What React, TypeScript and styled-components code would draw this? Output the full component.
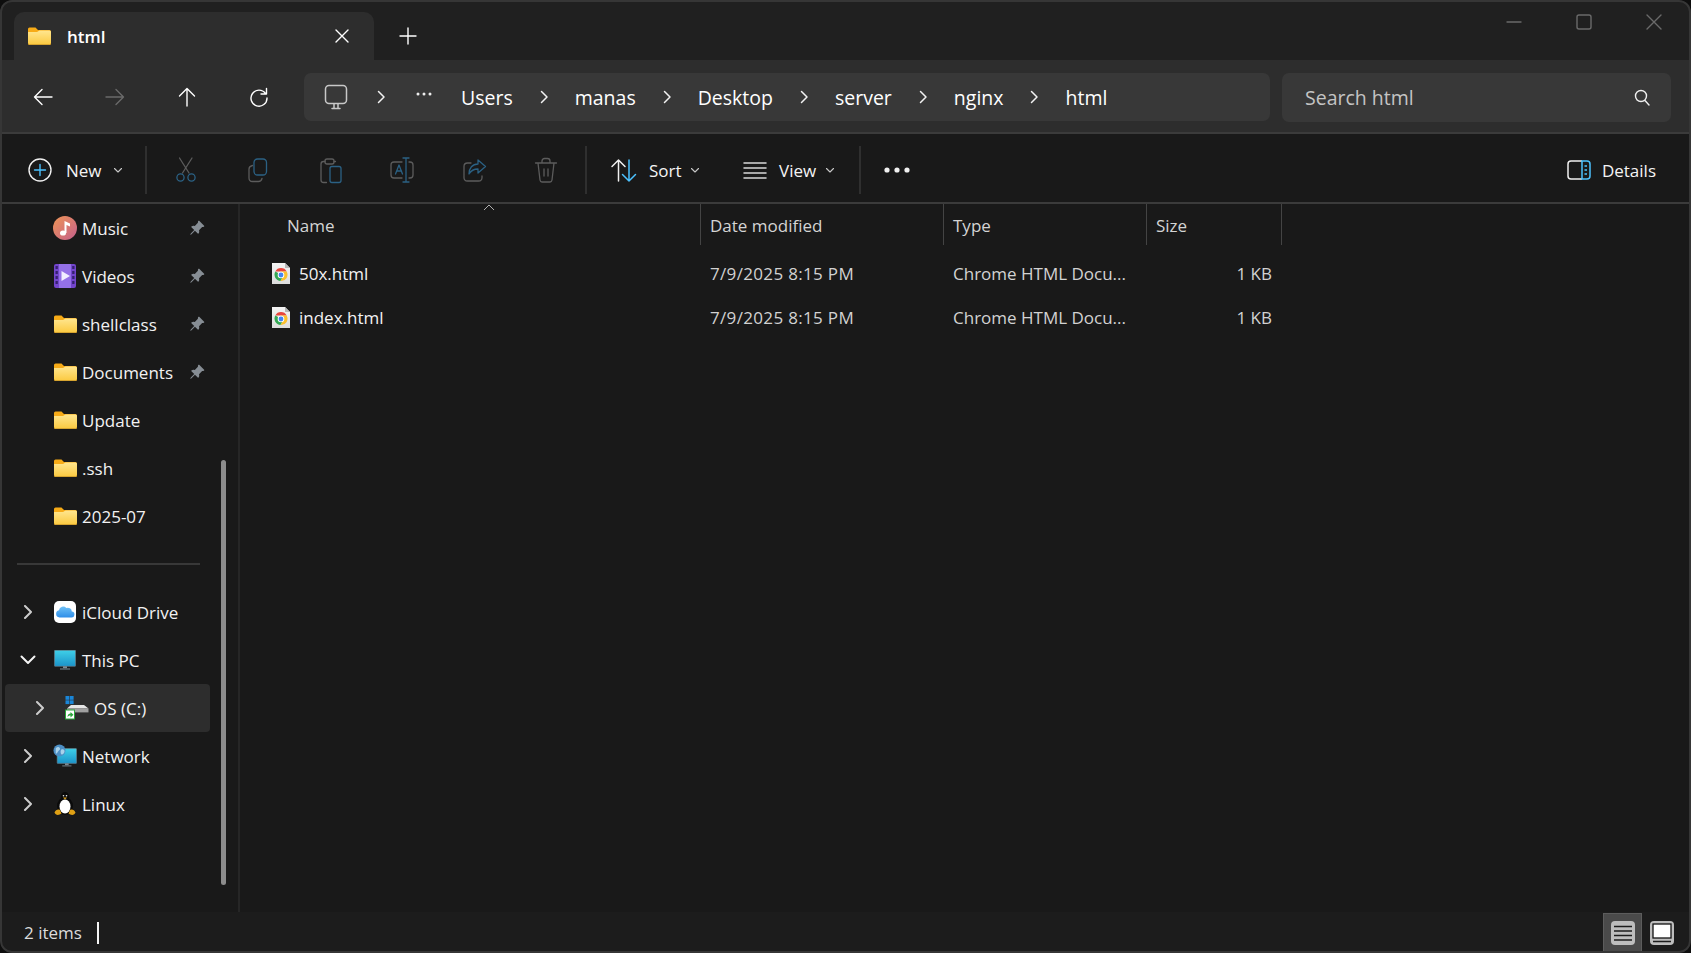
import React from 'react';
import styled, { createGlobalStyle } from 'styled-components';
import { BsPinAngleFill } from 'react-icons/bs';

const GlobalStyle = createGlobalStyle`
  html, body {
    margin: 0;
    padding: 0;
    background: #0e0e0e;
    overflow: hidden;
  }
  * {
    box-sizing: border-box;
  }
`;

const Window = styled.div`
  position: relative;
  width: 1691px;
  height: 953px;
  display: flex;
  flex-direction: column;
  background: #191919;
  border-radius: 12px;
  overflow: hidden;
  color: #f2f2f2;
  font-family: 'Open Sans', 'Liberation Sans', sans-serif;
  font-size: 17px;

  &::after {
    content: '';
    position: absolute;
    inset: 0;
    border: 2px solid #363636;
    border-radius: 12px;
    pointer-events: none;
  }
`;

const TabStrip = styled.div`
  height: 60px;
  flex: none;
  display: flex;
  align-items: flex-end;
  padding-left: 14px;
  background: #202020;
`;

const Tab = styled.div`
  width: 360px;
  height: 48px;
  display: flex;
  align-items: center;
  padding: 0 20px 0 14px;
  gap: 16px;
  background: #2d2d2d;
  border-radius: 10px 10px 0 0;
`;

const TabTitle = styled.span`
  flex: 1;
  font-size: 17px;
  font-weight: 600;
  color: #fff;
`;

const AddTab = styled.div`
  width: 68px;
  height: 48px;
  display: flex;
  align-items: center;
  justify-content: center;
`;

const WindowButtons = styled.div`
  margin-left: auto;
  align-self: flex-start;
  height: 44px;
  display: flex;
  align-items: center;
  padding-right: 2px;
`;

const WindowButton = styled.div`
  width: 70px;
  display: flex;
  justify-content: center;
`;

const NavBar = styled.div`
  height: 74px;
  flex: none;
  display: flex;
  align-items: center;
  padding: 2px 20px 0 7px;
  background: #2d2d2d;
  border-bottom: 2px solid #3b3b3b;
`;

const NavButton = styled.div`
  width: 72px;
  display: flex;
  justify-content: center;
`;

const AddressBar = styled.div`
  width: 966px;
  height: 48px;
  margin-left: 9px;
  display: flex;
  align-items: center;
  gap: 25px;
  padding-left: 18px;
  background: #383838;
  border-radius: 7px;
`;

const Crumb = styled.span`
  font-size: 19.5px;
  color: #fff;
`;

const CrumbDots = styled.svg`
  flex: none;
  margin: 0 3px 6px 3px;
`;

const SearchBox = styled.div`
  flex: 1;
  height: 49px;
  margin-left: 12px;
  display: flex;
  align-items: center;
  justify-content: space-between;
  padding: 0 17px 0 23px;
  background: #383838;
  border-radius: 7px;
  font-size: 19.5px;
  color: #c4c4c4;
`;

const ToolBar = styled.div`
  height: 70px;
  flex: none;
  display: flex;
  align-items: center;
  padding-top: 4px;
  background: #191919;
  border-bottom: 2px solid #3b3b3b;
`;

const LabelButton = styled.div<{ $width: number; $pad: number; $gap?: number }>`
  width: ${(p) => p.$width}px;
  padding-left: ${(p) => p.$pad}px;
  display: flex;
  align-items: center;
  gap: ${(p) => p.$gap ?? 10}px;
  flex: none;
`;

const ButtonLabel = styled.span`
  color: #f4f4f4;
`;

const DropCaret = styled.svg`
  flex: none;
  margin-left: -3px;
`;

const ToolSep = styled.div`
  width: 2px;
  height: 48px;
  margin: 0 3px;
  flex: none;
  background: #2f2f2f;
`;

const ToolIcon = styled.div`
  width: 72px;
  display: flex;
  justify-content: center;
  flex: none;
`;

const DetailsButton = styled.div`
  margin-left: auto;
  padding-right: 35px;
  display: flex;
  align-items: center;
  gap: 11px;
`;

const Body = styled.div`
  flex: 1;
  min-height: 0;
  display: flex;
`;

const Sidebar = styled.nav`
  position: relative;
  width: 240px;
  flex: none;
  border-right: 2px solid #262626;
`;

const NavRow = styled.div<{ $depth?: number; $active?: boolean }>`
  width: 205px;
  height: 48px;
  margin-left: 5px;
  display: flex;
  align-items: center;
  padding: 0 5px 0 ${(p) => 11 + (p.$depth ?? 0) * 12}px;
  background: ${(p) => (p.$active ? '#2d2d2d' : 'transparent')};
  border-radius: 4px;
`;

const ChevronSlot = styled.div`
  width: 24px;
  flex: none;
  display: flex;
  justify-content: center;
`;

const RowIcon = styled.div`
  width: 24px;
  height: 24px;
  margin: 0 5px 0 13px;
  flex: none;
  display: flex;
  align-items: center;
  justify-content: center;
`;

const PinSlot = styled.div`
  margin-left: auto;
  width: 16px;
  display: flex;
  color: #868d94;
`;

const NavDivider = styled.div`
  height: 48px;
  display: flex;
  align-items: center;
  padding: 0 38px 0 17px;

  &::before {
    content: '';
    flex: 1;
    height: 2px;
    background: #383838;
  }
`;

const ScrollThumb = styled.div`
  position: absolute;
  left: 221px;
  top: 256px;
  width: 5px;
  height: 425px;
  border-radius: 3px;
  background: #8c8c8c;
`;

const Content = styled.main`
  flex: 1;
  min-width: 0;
`;

const columns = '461px 243px 203px 135px';

const ListHeader = styled.div`
  position: relative;
  display: grid;
  grid-template-columns: ${columns};
  height: 41px;
  margin-bottom: 7px;
`;

const HeaderCell = styled.div<{ $pad: number }>`
  display: flex;
  align-items: center;
  padding: 2px 0 0 ${(p) => p.$pad}px;
  border-right: 1px solid #444;
  color: #d4d4d4;
`;

const SortCaret = styled.svg`
  position: absolute;
  left: 243px;
  top: 0;
`;

const FileRow = styled.div`
  display: grid;
  grid-template-columns: ${columns};
  height: 43.5px;
  align-items: center;
`;

const NameCell = styled.div`
  display: flex;
  align-items: center;
  gap: 9px;
  padding-left: 32px;
`;

const FileCell = styled.div<{ $right?: boolean; $spaced?: boolean }>`
  padding: 0 10px 0 9px;
  text-align: ${(p) => (p.$right ? 'right' : 'left')};
  letter-spacing: ${(p) => (p.$spaced ? '0.33px' : '0')};
  color: #d2d2d2;
  white-space: nowrap;
`;

const FileName = styled.span`
  color: #f2f2f2;
`;

const StatusBar = styled.div`
  height: 41px;
  flex: none;
  display: flex;
  align-items: center;
  padding: 0 10px 0 24px;
  background: #1c1c1c;
  color: #dcdcdc;
`;

const Caret = styled.div`
  width: 2px;
  height: 22px;
  margin-left: 15px;
  background: #f4f4f4;
`;

const ViewToggle = styled.div<{ $on?: boolean }>`
  width: 39px;
  height: 39px;
  margin-left: ${(p) => (p.$on ? 'auto' : '0')};
  display: flex;
  align-items: center;
  justify-content: center;
  background: ${(p) => (p.$on ? '#4a4a4a' : 'transparent')};
  border: 1px solid ${(p) => (p.$on ? '#5c5c5c' : 'transparent')};
`;

const dim = '#5c5c5c';
const dimBlue = '#2b6184';
const sky = '#4cc2ff';

const Line = ({ d, color = '#fff', size = 24, width = 1.4 }: { d: string; color?: string; size?: number; width?: number }) => (
  <svg width={size} height={size} viewBox={`0 0 ${size} ${size}`} fill="none" stroke={color} strokeWidth={width} strokeLinecap="round" strokeLinejoin="round">
    <path d={d} />
  </svg>
);

const Chevron = ({ open }: { open?: boolean }) => (
  <svg width="16" height="14" viewBox="0 0 16 14" fill="none" stroke={open ? '#f4f4f4' : '#cccccc'} strokeWidth="2" strokeLinecap="round" strokeLinejoin="round">
    <path d={open ? 'M1.500 3.500 8 10 14.500 3.500' : 'M5 1 11 7 5 13'} />
  </svg>
);

const CrumbSep = () => (
  <svg width="12" height="16" viewBox="0 0 12 16" fill="none" stroke="#f2f2f2" strokeWidth="1.500" strokeLinecap="round" strokeLinejoin="round">
    <path d="M3.500 2.500 9 8 3.500 13.500" />
  </svg>
);

const Caretdown = () => (
  <DropCaret width="10" height="10" viewBox="0 0 10 10" fill="none" stroke="#c8c8c8" strokeWidth="1.100" strokeLinecap="round" strokeLinejoin="round">
    <path d="M1.500 3.500 5 7 8.500 3.500" />
  </DropCaret>
);

const Folder = ({ id }: { id: string }) => (
  <svg width="23" height="18" viewBox="0 0 23 18">
    <defs>
      <linearGradient id={id} x1="0" y1="0" x2="0" y2="1">
        <stop offset="0" stopColor="#ffe68f" />
        <stop offset="1" stopColor="#fbc93f" />
      </linearGradient>
    </defs>
    <path d="M0 2a1.500 1.500 0 0 1 1.500-1.500h6L10 3h11.500A1.500 1.500 0 0 1 23 4.500V7H0z" fill="#f7ab17" />
    <path d="M0 5h9l2.500-1.500H21.500A1.500 1.500 0 0 1 23 5v11.500a1.500 1.500 0 0 1-1.500 1.500h-20A1.500 1.500 0 0 1 0 16.500z" fill={`url(#${id})`} />
    <path d="M0 16.500a1.500 1.500 0 0 0 1.500 1.500h20a1.500 1.500 0 0 0 1.500-1.500" fill="none" stroke="#b17f1e" strokeWidth="1" />
  </svg>
);

const MusicIcon = () => (
  <svg width="24" height="24" viewBox="0 0 24 24">
    <defs>
      <linearGradient id="music" x1="0" y1="0" x2="1" y2="1">
        <stop offset="0" stopColor="#ee9556" />
        <stop offset="1" stopColor="#c45f8c" />
      </linearGradient>
    </defs>
    <circle cx="12" cy="12" r="12" fill="url(#music)" />
    <ellipse cx="10" cy="17" rx="3" ry="2.600" fill="#fff" />
    <path d="M11.500 17V5l5.500 2.500v3l-3.500-1.500V17z" fill="#fff" />
  </svg>
);

const VideoIcon = () => (
  <svg width="22" height="24" viewBox="0 0 22 24">
    <rect width="22" height="24" rx="2" fill="#7345cc" />
    <rect x="5" y="0" width="12" height="24" fill="#9470e6" />
    {[2, 7, 12, 17].map((y) => (
      <g key={y} fill="#35216f">
        <rect x="1.500" y={y} width="2.300" height="3" />
        <rect x="18.200" y={y} width="2.300" height="3" />
      </g>
    ))}
    <path d="M7.500 7 16 12l-8.500 5z" fill="#f1edff" />
  </svg>
);

const CloudIcon = () => (
  <svg width="22" height="22" viewBox="0 0 22 22">
    <defs>
      <linearGradient id="cloud" x1="0" y1="0" x2="0" y2="1">
        <stop offset="0" stopColor="#6ec1f7" />
        <stop offset="1" stopColor="#2f8ee8" />
      </linearGradient>
    </defs>
    <rect width="22" height="22" rx="5" fill="#fff" />
    <path d="M5.500 16.500a3.700 3.700 0 0 1-.5-7.300 4.200 4.200 0 0 1 7.300-2.200 4 4 0 0 1 5.500 3.500 3 3 0 0 1-.8 6z" fill="url(#cloud)" />
  </svg>
);

const Monitor = ({ id, x = 0, y = 0 }: { id: string; x?: number; y?: number }) => (
  <g transform={`translate(${x} ${y})`}>
    <defs>
      <linearGradient id={id} x1="0" y1="0" x2="0" y2="1">
        <stop offset="0" stopColor="#3fd0e8" />
        <stop offset="1" stopColor="#1b93c9" />
      </linearGradient>
    </defs>
    <rect width="21" height="16" rx="0.500" fill={`url(#${id})`} stroke="#70808a" strokeWidth="0.600" />
    <rect x="8.500" y="16" width="4" height="2" fill="#7d8b93" />
    <rect x="5.500" y="18" width="10" height="1.400" fill="#5f6b72" />
  </g>
);

const PcIcon = () => (
  <svg width="22" height="20" viewBox="0 0 22 20">
    <Monitor id="pc" x={0.500} y={0.300} />
  </svg>
);

const NetworkIcon = () => (
  <svg width="26" height="26" viewBox="0 0 26 26">
    <Monitor id="net" x={4.500} y={5} />
    <circle cx="7" cy="7" r="6.500" fill="#4d8fc4" />
    <path d="M3 4.500c2-2 3.500-1.500 4.500 0s-1 2-2 3.500S4 11 3 10zM9 6c2-1 3.500 0 3.500 2S10 12 9 11s-1-4 0-5z" fill="#a9d2ea" />
  </svg>
);

const DriveIcon = () => (
  <svg width="24" height="24" viewBox="0 0 24 24">
    <g fill="#1a86d8">
      <rect x="0.500" y="0" width="3.800" height="3.800" />
      <rect x="4.800" y="0" width="3.800" height="3.800" />
      <rect x="0.500" y="4.300" width="3.800" height="3.800" />
      <rect x="4.800" y="4.300" width="3.800" height="3.800" />
    </g>
    <path d="M6 9h13l4.500 3.500H2z" fill="#e6e6e6" />
    <rect x="2" y="12.500" width="21.500" height="3.500" fill="#a0a0a0" />
    <rect x="2" y="16" width="21.500" height="1" fill="#5a5a5a" />
    <rect x="0.500" y="14" width="9" height="9" fill="#fff" stroke="#2aa63a" strokeWidth="1" />
    <path d="M2.500 21c0-2.500 1.500-3.500 3-3.500V16l3 2.700-3 2.700v-1.800c-1 0-2 .3-3 1.400z" fill="#2aa63a" />
  </svg>
);

const TuxIcon = () => (
  <svg width="22" height="24" viewBox="0 0 22 24">
    <ellipse cx="11" cy="14" rx="8" ry="9" fill="#0a0a0a" />
    <ellipse cx="11" cy="5" rx="4.200" ry="5" fill="#0a0a0a" />
    <ellipse cx="11" cy="14.500" rx="5.500" ry="7" fill="#fff" />
    <circle cx="9.500" cy="3.800" r="0.800" fill="#eee" />
    <circle cx="12.500" cy="3.800" r="0.800" fill="#eee" />
    <path d="M9 5.500h4l-2 2z" fill="#e2a51a" />
    <path d="M0.500 20.500c1-2.500 3.500-3.500 5.500-2.500l1.500 3.500c-2.500 2-6 2-7-1zM21.500 20.500c-1-2.500-3.500-3.500-5.500-2.500l-1.500 3.500c2.500 2 6 2 7-1z" fill="#dfa015" />
  </svg>
);

const ChromeFile = ({ id }: { id: string }) => (
  <svg width="18" height="21" viewBox="0 0 18 21">
    <defs>
      <linearGradient id={id} x1="0" y1="0" x2="0" y2="1">
        <stop offset="0" stopColor="#f4f4f4" />
        <stop offset="1" stopColor="#dcdcdc" />
      </linearGradient>
    </defs>
    <path d="M0 0h13l5 5v16H0z" fill={`url(#${id})`} />
    <path d="M13 0v5h5z" fill="#b8b8b8" />
    <path d="M3.300 8.500A6.500 6.500 0 0 1 14.700 8.500H9z" fill="#e8453c" />
    <path d="M3.300 8.500A6.500 6.500 0 0 0 8.500 18.100L11.500 13z" fill="#34a853" />
    <path d="M14.700 8.500A6.500 6.500 0 0 1 8.500 18.100L11.800 12.500 9 8.500z" fill="#fbc02d" />
    <circle cx="9" cy="12" r="3.300" fill="#fff" />
    <circle cx="9" cy="12" r="2.400" fill="#4285f4" />
  </svg>
);

const DetailsListIcon = () => (
  <svg width="24" height="24" viewBox="0 0 24 24">
    <rect width="24" height="24" rx="4" fill="#bdbdbd" />
    <path d="M3 5.500h18M3 10h18M3 14.500h18M3 19h18" stroke="#1c1c1c" strokeWidth="1.300" />
  </svg>
);

const TilesIcon = () => (
  <svg width="24" height="24" viewBox="0 0 24 24">
    <rect width="24" height="24" rx="4" fill="#bdbdbd" />
    <rect x="3" y="3" width="18" height="14" fill="#fff" stroke="#111" strokeWidth="1.300" />
    <path d="M3 20.500h18" stroke="#1c1c1c" strokeWidth="1.300" />
  </svg>
);

const toolIcons: { id: string; icon: React.ReactNode }[] = [
  {
    id: 'cut',
    icon: (
      <svg width="28" height="28" viewBox="0 0 28 28" fill="none" strokeWidth="1.300" strokeLinecap="round">
        <path d="M7.500 2 17 17M20 2 10.500 17" stroke={dim} />
        <circle cx="8.500" cy="21.500" r="3.600" stroke={dimBlue} />
        <circle cx="19.500" cy="21.500" r="3.600" stroke={dimBlue} />
      </svg>
    ),
  },
  {
    id: 'copy',
    icon: (
      <svg width="28" height="28" viewBox="0 0 28 28" fill="none" strokeWidth="1.300" strokeLinecap="round">
        <path d="M8.500 9.500C6.500 10 5 11 5 13v9c0 2 1.500 3.500 3.500 3.500h6c2 0 3-1 3.500-3" stroke={dim} />
        <rect x="10" y="3" width="12.500" height="16" rx="3.500" stroke={dimBlue} />
      </svg>
    ),
  },
  {
    id: 'paste',
    icon: (
      <svg width="28" height="28" viewBox="0 0 28 28" fill="none" strokeWidth="1.300" strokeLinecap="round" strokeLinejoin="round">
        <path d="M9 5.500H7.500C6 5.500 5 6.500 5 8v16c0 1.500 1 2.500 2.500 2.500h3M19.500 5.500H18" stroke={dim} />
        <rect x="9" y="3" width="9" height="5" rx="2" stroke={dim} />
        <rect x="14" y="10.500" width="11" height="16" rx="2" stroke={dimBlue} />
      </svg>
    ),
  },
  {
    id: 'rename',
    icon: (
      <svg width="28" height="28" viewBox="0 0 28 28" fill="none" strokeWidth="1.300" strokeLinecap="round" strokeLinejoin="round">
        <path d="M14 6H6C4 6 3 7 3 9v10c0 2 1 3 3 3h8M21 6h1c2 0 3 1 3 3v10c0 2-1 3-3 3h-1" stroke={dim} />
        <path d="M15 2h6M18 2v24M15 26h6M7.500 18l3.500-9 3.500 9M9 15h4.500" stroke={dimBlue} />
      </svg>
    ),
  },
  {
    id: 'share',
    icon: (
      <svg width="28" height="28" viewBox="0 0 28 28" fill="none" strokeWidth="1.300" strokeLinecap="round" strokeLinejoin="round">
        <path d="M11 7H7.500C5.500 7 4 8.500 4 10.500v11C4 23.500 5.500 25 7.500 25h11c2 0 3.500-1.500 3.500-3.500V20" stroke={dim} />
        <path d="M18 4l7.500 6.500L18 17v-4c-4 0-7 1.500-9 5 0-6 3.500-10 9-10z" stroke={dimBlue} />
      </svg>
    ),
  },
  {
    id: 'delete',
    icon: (
      <svg width="28" height="28" viewBox="0 0 28 28" fill="none" stroke={dim} strokeWidth="1.300" strokeLinecap="round" strokeLinejoin="round">
        <path d="M3.500 7h21M10 7V5c0-1.500 1-2.500 2.500-2.500h3C17 2.500 18 3.500 18 5v2M6 7l2 17c.2 1.300 1 2 2 2h8c1 0 1.800-.7 2-2l2-17M12 13v7M16 13v7" />
      </svg>
    ),
  },
];

const crumbs = ['Users', 'manas', 'Desktop', 'server', 'nginx', 'html'];

type NavItem = { label: string; icon: React.ReactNode; pinned?: boolean };

const quickAccess: NavItem[] = [
  { label: 'Music', icon: <MusicIcon />, pinned: true },
  { label: 'Videos', icon: <VideoIcon />, pinned: true },
  { label: 'shellclass', icon: <Folder id="f1" />, pinned: true },
  { label: 'Documents', icon: <Folder id="f2" />, pinned: true },
  { label: 'Update', icon: <Folder id="f3" /> },
  { label: '.ssh', icon: <Folder id="f4" /> },
  { label: '2025-07', icon: <Folder id="f5" /> },
];

const files = [
  { name: '50x.html', id: 'c1' },
  { name: 'index.html', id: 'c2' },
];

const App = () => (
  <Window>
    <GlobalStyle />
    <TabStrip>
      <Tab>
        <Folder id="tab" />
        <TabTitle>html</TabTitle>
        <Line d="M6 6 18 18M18 6 6 18" size={24} width={1.4} />
      </Tab>
      <AddTab>
        <Line d="M12 4v16M4 12h16" size={24} width={1.4} />
      </AddTab>
      <WindowButtons>
        <WindowButton>
          <Line d="M5 12h14" color="#6a6a6a" />
        </WindowButton>
        <WindowButton>
          <svg width="24" height="24" viewBox="0 0 24 24" fill="none" stroke="#6a6a6a" strokeWidth="1.400">
            <rect x="5" y="5" width="14" height="14" rx="2" />
          </svg>
        </WindowButton>
        <WindowButton>
          <Line d="M5 5 19 19M19 5 5 19" color="#6a6a6a" />
        </WindowButton>
      </WindowButtons>
    </TabStrip>

    <NavBar>
      <NavButton>
        <Line d="M21 12H3.500M11 4.500 3.500 12l7.500 7.500" />
      </NavButton>
      <NavButton>
        <Line d="M3 12h17.500M13 4.500l7.500 7.500-7.500 7.500" color="#6a6a6a" />
      </NavButton>
      <NavButton>
        <Line d="M12 21V3.500M4.500 11 12 3.500l7.500 7.500" />
      </NavButton>
      <NavButton>
        <Line d="M18.500 8.500A8 8 0 1 0 20 13M19.500 3.500v5.500H14" />
      </NavButton>
      <AddressBar>
        <svg width="28" height="28" viewBox="0 0 28 28" fill="none" stroke="#c8c8c8" strokeWidth="1.500" strokeLinecap="round">
          <rect x="3.500" y="2.500" width="21" height="18" rx="3.500" />
          <path d="M10 25.500h8M12 21v4M16 21v4" />
        </svg>
        <CrumbSep />
        <CrumbDots width="18" height="16" viewBox="0 0 18 16" fill="#eee">
          <circle cx="3" cy="8" r="1.500" />
          <circle cx="9" cy="8" r="1.500" />
          <circle cx="15" cy="8" r="1.500" />
        </CrumbDots>
        {crumbs.map((crumb, i) => (
          <React.Fragment key={crumb}>
            <Crumb>{crumb}</Crumb>
            {i < crumbs.length - 1 && <CrumbSep />}
          </React.Fragment>
        ))}
      </AddressBar>
      <SearchBox>
        Search html
        <Line d="M11 5.500a5.500 5.500 0 1 1 0 11 5.500 5.500 0 0 1 0-11zM15 15.500l4 4.500" color="#f0f0f0" />
      </SearchBox>
    </NavBar>

    <ToolBar>
      <LabelButton $width={142} $pad={28} $gap={14}>
        <svg width="24" height="24" viewBox="0 0 24 24" fill="none" strokeWidth="1.400" strokeLinecap="round">
          <circle cx="12" cy="12" r="11" stroke="#f0f0f0" />
          <path d="M12 6.500v11M6.500 12h11" stroke={sky} />
        </svg>
        <ButtonLabel>New</ButtonLabel>
        <Caretdown />
      </LabelButton>
      <ToolSep />
      {toolIcons.map(({ id, icon }) => (
        <ToolIcon key={id}>{icon}</ToolIcon>
      ))}
      <ToolSep />
      <LabelButton $width={145} $pad={20} $gap={11}>
        <svg width="28" height="28" viewBox="0 0 28 28" fill="none" strokeWidth="1.500" strokeLinecap="round" strokeLinejoin="round">
          <path d="M8.500 25V4M2 10.500 8.500 4l6.500 6.500" stroke="#f0f0f0" />
          <path d="M19 4v21M12.500 18.500 19 25l6.500-6.500" stroke={sky} />
        </svg>
        <ButtonLabel>Sort</ButtonLabel>
        <Caretdown />
      </LabelButton>
      <LabelButton $width={121} $pad={8} $gap={12}>
        <Line d="M1 5h22M1 10h22M1 15h22M1 20h22" color="#d8d8d8" width={1.5} />
        <ButtonLabel>View</ButtonLabel>
        <Caretdown />
      </LabelButton>
      <ToolSep />
      <LabelButton $width={60} $pad={20}>
        <svg width="26" height="6" viewBox="0 0 26 6" fill="#f0f0f0">
          <circle cx="3" cy="3" r="2.600" />
          <circle cx="13" cy="3" r="2.600" />
          <circle cx="23" cy="3" r="2.600" />
        </svg>
      </LabelButton>
      <DetailsButton>
        <svg width="24" height="20" viewBox="0 0 24 20" fill="none" strokeWidth="1.500">
          <path d="M15 1H4C2.300 1 1 2.300 1 4v12c0 1.700 1.300 3 3 3h11" stroke="#f0f0f0" />
          <path d="M15 1h5c1.700 0 3 1.300 3 3v12c0 1.700-1.300 3-3 3h-5z" stroke={sky} />
          <path d="M17.500 6H20M17.500 10H20M17.500 14H20" stroke={sky} />
        </svg>
        <ButtonLabel>Details</ButtonLabel>
      </DetailsButton>
    </ToolBar>

    <Body>
      <Sidebar>
        {quickAccess.map(({ label, icon, pinned }) => (
          <NavRow key={label}>
            <ChevronSlot />
            <RowIcon>{icon}</RowIcon>
            {label}
            {pinned && (
              <PinSlot>
                <BsPinAngleFill size={16} />
              </PinSlot>
            )}
          </NavRow>
        ))}
        <NavDivider />
        <NavRow>
          <ChevronSlot><Chevron /></ChevronSlot>
          <RowIcon><CloudIcon /></RowIcon>
          iCloud Drive
        </NavRow>
        <NavRow>
          <ChevronSlot><Chevron open /></ChevronSlot>
          <RowIcon><PcIcon /></RowIcon>
          This PC
        </NavRow>
        <NavRow $depth={1} $active>
          <ChevronSlot><Chevron /></ChevronSlot>
          <RowIcon><DriveIcon /></RowIcon>
          OS (C:)
        </NavRow>
        <NavRow>
          <ChevronSlot><Chevron /></ChevronSlot>
          <RowIcon><NetworkIcon /></RowIcon>
          Network
        </NavRow>
        <NavRow>
          <ChevronSlot><Chevron /></ChevronSlot>
          <RowIcon><TuxIcon /></RowIcon>
          Linux
        </NavRow>
        <ScrollThumb />
      </Sidebar>
      <Content>
        <ListHeader>
          <HeaderCell $pad={47}>Name</HeaderCell>
          <HeaderCell $pad={9}>Date modified</HeaderCell>
          <HeaderCell $pad={9}>Type</HeaderCell>
          <HeaderCell $pad={9}>Size</HeaderCell>
          <SortCaret width="12" height="7" viewBox="0 0 12 7" fill="none" stroke="#b0b0b0" strokeWidth="1">
            <path d="M1 6 6 1l5 5" />
          </SortCaret>
        </ListHeader>
        {files.map(({ name, id }) => (
          <FileRow key={name}>
            <NameCell>
              <ChromeFile id={id} />
              <FileName>{name}</FileName>
            </NameCell>
            <FileCell $spaced>7/9/2025 8:15 PM</FileCell>
            <FileCell>Chrome HTML Docu...</FileCell>
            <FileCell $right>1 KB</FileCell>
          </FileRow>
        ))}
      </Content>
    </Body>

    <StatusBar>
      2 items
      <Caret />
      <ViewToggle $on>
        <DetailsListIcon />
      </ViewToggle>
      <ViewToggle>
        <TilesIcon />
      </ViewToggle>
    </StatusBar>
  </Window>
);

export default App;
